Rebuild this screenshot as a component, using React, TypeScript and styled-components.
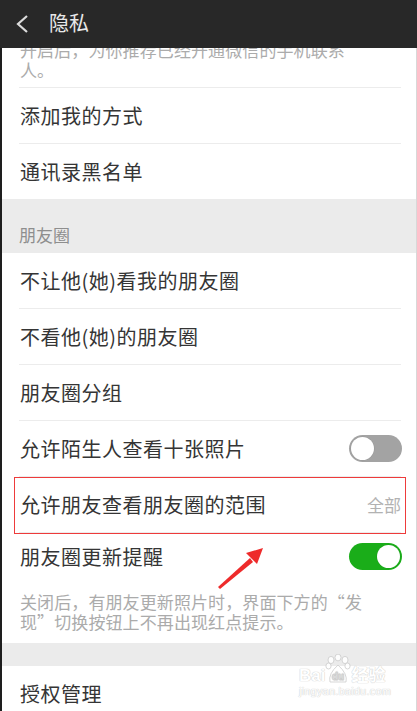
import styled, { createGlobalStyle } from 'styled-components'

const GlobalStyle = createGlobalStyle`
	html, body {
		margin: 0;
		padding: 0;
		height: 100%;
		overflow: hidden;
		background: #ffffff;
	}
	body {
		font-family: "Noto Sans CJK SC", "Noto Sans", sans-serif;
		-webkit-font-smoothing: antialiased;
	}
`

const Screen = styled.div`
	width: 417px;
	height: 711px;
	display: flex;
	flex-direction: column;
	overflow: hidden;
	position: relative;
	background: #ffffff;
`

const Header = styled.header`
	height: 48px;
	flex: none;
	display: flex;
	align-items: center;
	background: #282828;
	position: relative;
	z-index: 1;
`

const Back = styled.div`
	width: 49px;
	height: 48px;
	display: flex;
	align-items: center;
	padding-left: 15px;
	box-sizing: border-box;
`

const Title = styled.h1`
	margin: 0;
	font-size: 20px;
	font-weight: 400;
	color: #e8e8e8;
	line-height: 1;
	padding-bottom: 3px;
`

const Content = styled.main`
	flex: 1;
	overflow: hidden;
	border-left: 2px solid #1e1e1e;
	border-right: 1px solid #d8d8d8;
	background: #ffffff;
`

const Note = styled.p<{ $top?: boolean }>`
	margin: ${(p) => (p.$top ? '-8px 0 0' : '0')};
	padding: ${(p) => (p.$top ? '0 20px 7px 18px' : '12px 20px 11px 18px')};
	font-size: 17px;
	line-height: 20px;
	letter-spacing: 0.1px;
	color: #ababab;
`

const Divider = styled.div`
	height: 1px;
	margin: 0 15px 0 17px;
	background: #ececec;
`

const Row = styled.div<{ $height?: number; $marked?: boolean }>`
	height: ${(p) => p.$height ?? 55}px;
	display: flex;
	align-items: center;
	justify-content: space-between;
	padding: 0 14px 0 18px;
	position: relative;

	${(p) =>
		p.$marked &&
		`
		&::after {
			content: '';
			position: absolute;
			top: 0;
			bottom: -2px;
			left: 12px;
			right: 10px;
			border: 1px solid #ee3b3b;
		}
	`}
`

const Label = styled.span`
	font-size: 20px;
	color: #353535;
	letter-spacing: 0.5px;
`

const Value = styled.span`
	font-size: 17px;
	color: #b2b2b2;
	padding-right: 1px;
`

const Section = styled.div<{ $height: number }>`
	height: ${(p) => p.$height}px;
	background: #ebebeb;
	display: flex;
	align-items: flex-end;
	padding-left: 17px;
`

const SectionTitle = styled.span`
	font-size: 17px;
	line-height: 24px;
	color: #8e8e8e;
	padding-bottom: 6px;
`

const Track = styled.div<{ $on: boolean }>`
	width: 53px;
	height: 27px;
	border-radius: 14px;
	background: ${(p) => (p.$on ? '#1aad19' : '#a3a3a3')};
	display: flex;
	align-items: center;
	justify-content: ${(p) => (p.$on ? 'flex-end' : 'flex-start')};
	padding: 2px;
	box-sizing: border-box;
`

const Knob = styled.div`
	width: 23px;
	height: 23px;
	border-radius: 50%;
	background: #ffffff;
	box-shadow: 0 0 0 0.5px rgba(0, 0, 0, 0.08);
`

const Arrow = styled.svg`
	position: absolute;
	left: 214px;
	top: 544px;
`

const Watermark = styled.div`
	position: absolute;
	left: 299px;
	top: 654px;
	display: flex;
	flex-direction: column;
	align-items: flex-start;
	color: #ffffff;
	opacity: 0.9;
	text-shadow: 0 0 1px #c8c8c8, 0 0 1px #c8c8c8;
	pointer-events: none;
`

const MarkLine = styled.div`
	display: flex;
	align-items: flex-end;
	font-family: "Liberation Sans", "Noto Sans CJK SC", sans-serif;
	font-weight: 700;
	font-size: 17px;
	line-height: 17px;
`

const MarkSub = styled.div`
	font-family: "Liberation Sans", sans-serif;
	font-size: 11px;
	line-height: 12px;
	letter-spacing: 0.2px;
	margin-top: 1px;
`

const Toggle = ({ on }: { on: boolean }) => (
	<Track $on={on}>
		<Knob />
	</Track>
)

const App = () => {
	return (
		<Screen>
			<GlobalStyle />
			<Header>
				<Back>
					<svg width="14" height="20" viewBox="0 0 14 20">
						<polyline points="12,2 3,10 12,18" fill="none" stroke="#dcdcdc" strokeWidth="2.2" />
					</svg>
				</Back>
				<Title>隐私</Title>
			</Header>

			<Content>
				<Note $top>
					开启后，为你推荐已经开通微信的手机联系
					<br />
					人。
				</Note>
				<Divider />
				<Row>
					<Label>添加我的方式</Label>
				</Row>
				<Divider />
				<Row>
					<Label>通讯录黑名单</Label>
				</Row>

				<Section $height={54}>
					<SectionTitle>朋友圈</SectionTitle>
				</Section>

				<Row>
					<Label>不让他(她)看我的朋友圈</Label>
				</Row>
				<Divider />
				<Row>
					<Label>不看他(她)的朋友圈</Label>
				</Row>
				<Divider />
				<Row>
					<Label>朋友圈分组</Label>
				</Row>
				<Divider />
				<Row>
					<Label>允许陌生人查看十张照片</Label>
					<Toggle on={false} />
				</Row>
				<Divider />
				<Row $marked>
					<Label>允许朋友查看朋友圈的范围</Label>
					<Value>全部</Value>
				</Row>
				<Divider />
				<Row $height={47}>
					<Label>朋友圈更新提醒</Label>
					<Toggle on />
				</Row>
				<Note>
					关闭后，有朋友更新照片时，界面下方的“发
					<br />
					现”切换按钮上不再出现红点提示。
				</Note>

				<Section $height={23} />
				<Row>
					<Label>授权管理</Label>
				</Row>
			</Content>

			<Arrow width="54" height="46" viewBox="0 0 54 46">
				<polygon points="4,43 36,14 39,18 6,45" fill="#ee2b2b" />
				<polygon points="49,4 32,9 43,20" fill="#ee2b2b" />
			</Arrow>

			<Watermark>
				<MarkLine>
					<span>Bai</span>
					<svg width="26" height="30" viewBox="0 0 26 30">
						<g fill="#ffffff" stroke="#c8c8c8" strokeWidth="0.8">
							<ellipse cx="6" cy="6" rx="3" ry="3.6" />
							<ellipse cx="13" cy="3.5" rx="3" ry="3.4" />
							<ellipse cx="20" cy="6" rx="3" ry="3.6" />
							<ellipse cx="3.5" cy="12" rx="2.6" ry="3" />
							<ellipse cx="22.5" cy="12" rx="2.6" ry="3" />
							<path d="M5 28 Q3 20 13 11 Q23 20 21 28 Z" />
						</g>
						<text x="13" y="26" textAnchor="middle" fontSize="10" fontWeight="700" fill="#ffffff" stroke="#c8c8c8" strokeWidth="0.5" fontFamily="Liberation Sans, sans-serif">du</text>
					</svg>
					<span>经验</span>
				</MarkLine>
				<MarkSub>jingyan.baidu.com</MarkSub>
			</Watermark>
		</Screen>
	)
}

export default App
